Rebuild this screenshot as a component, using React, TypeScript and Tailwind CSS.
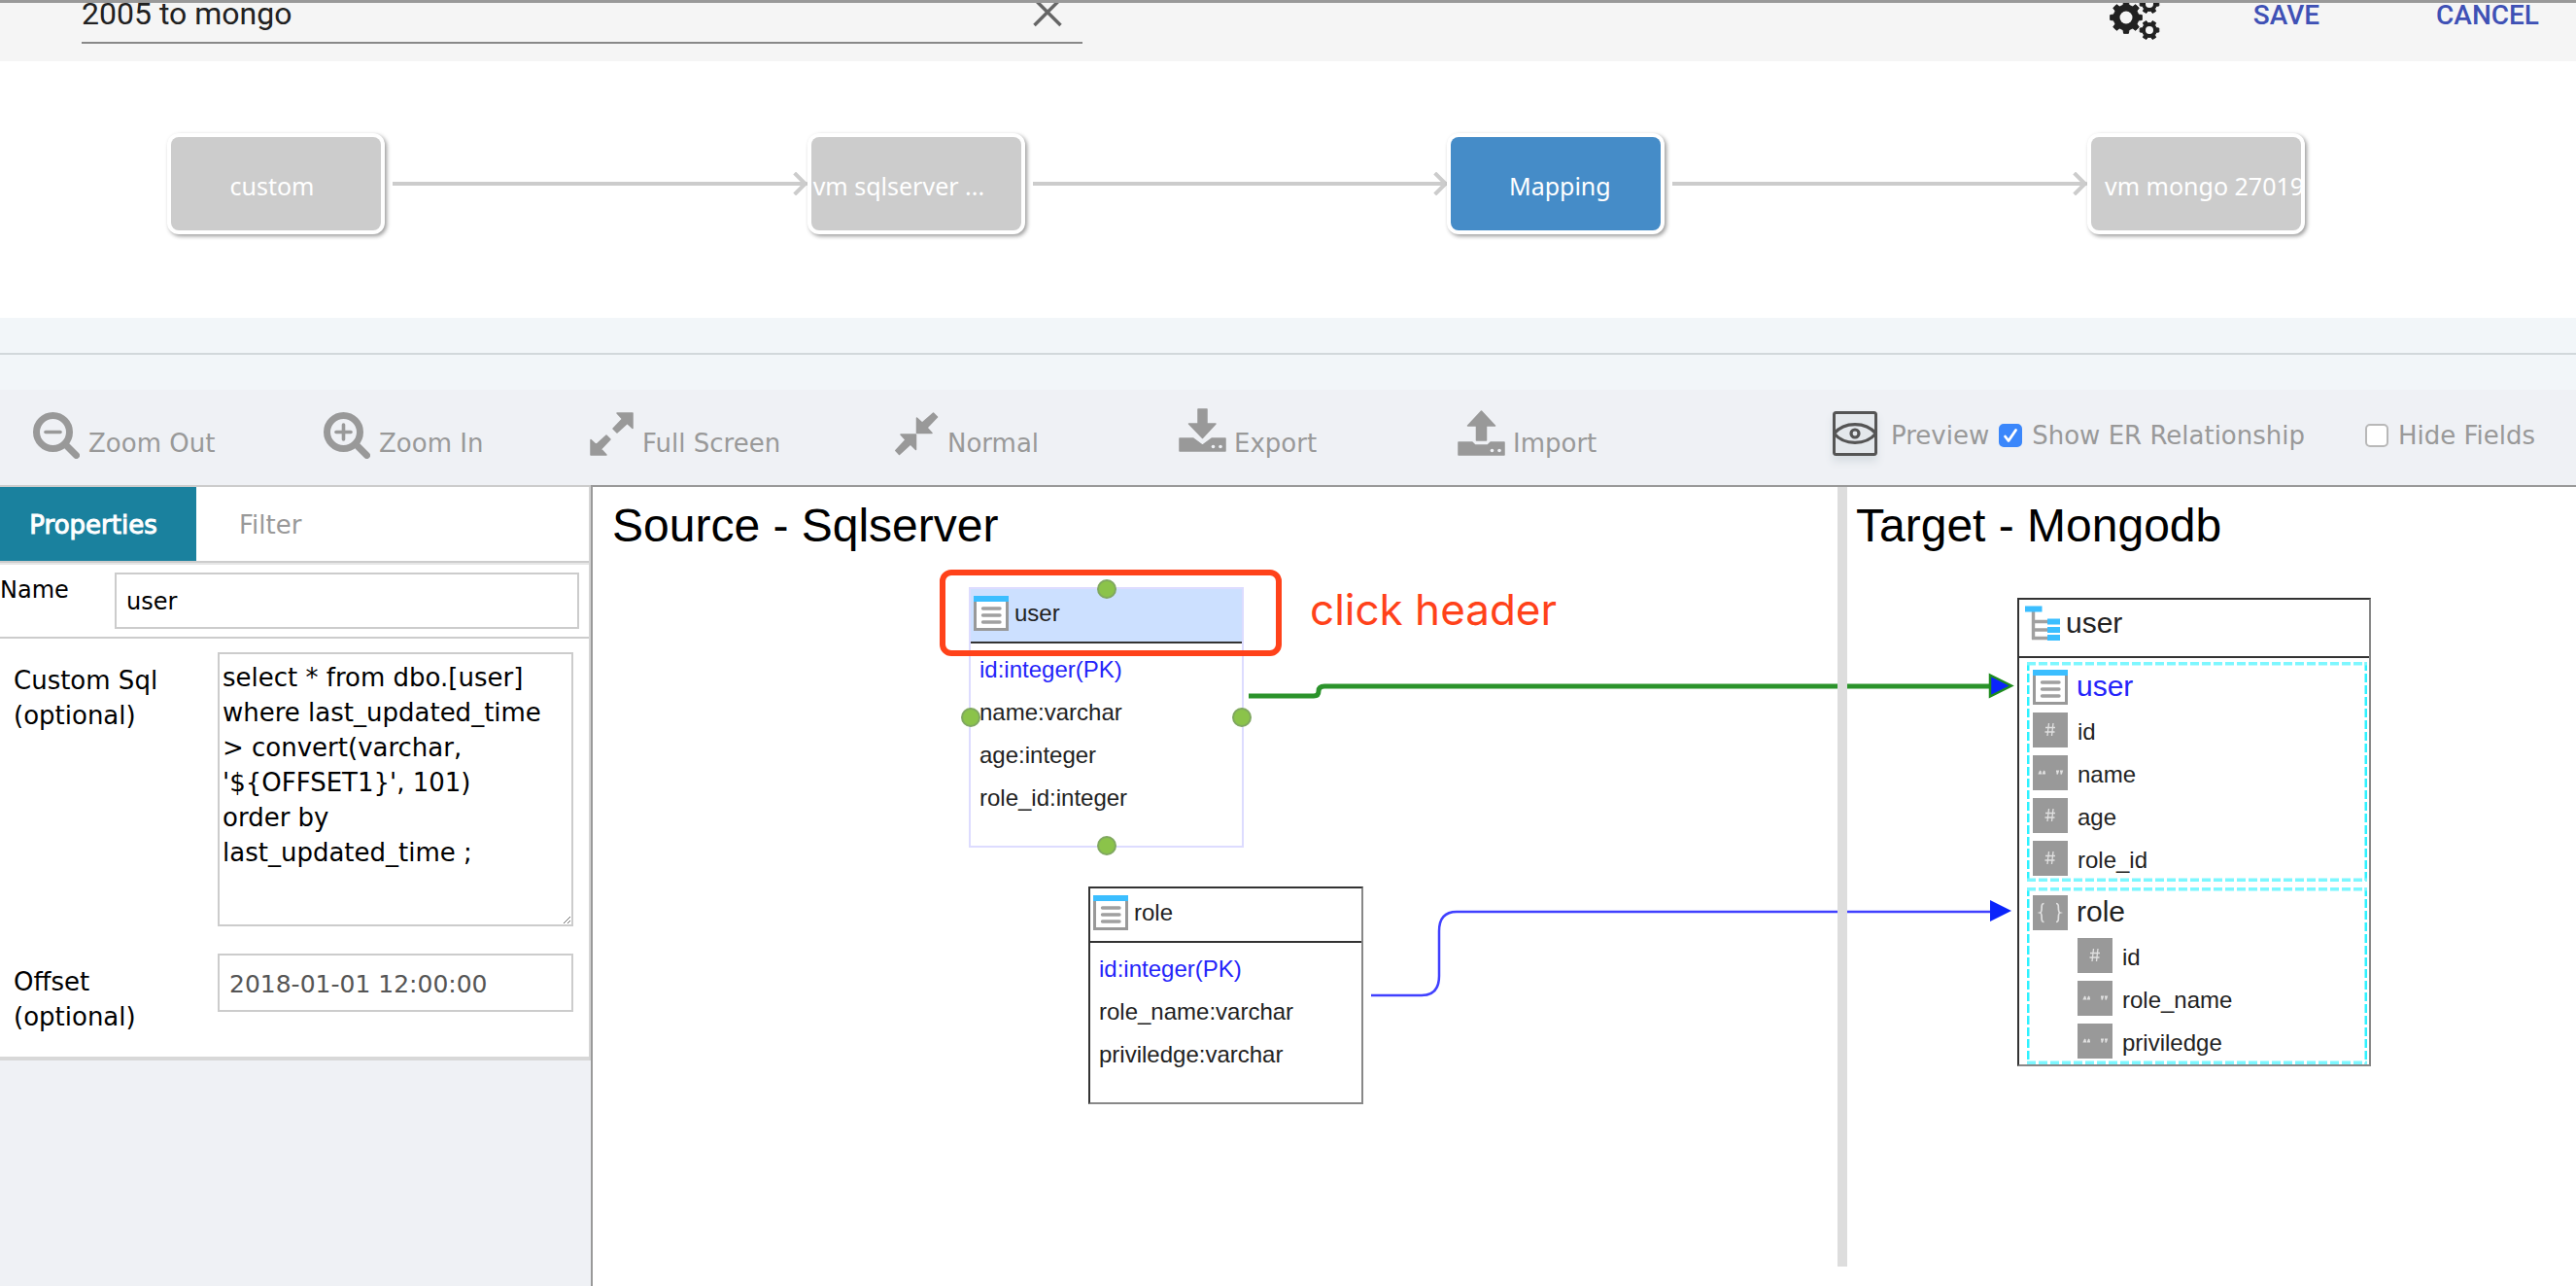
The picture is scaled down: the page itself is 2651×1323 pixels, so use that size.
import React from "react";

const stages = [
  { label: "custom", tone: "bg-[#ccc]", align: "text-center pr-2" },
  { label: "vm sqlserver ...", tone: "bg-[#ccc]", align: "text-left pl-0.5" },
  { label: "Mapping", tone: "bg-[#458cc8]", align: "text-center pl-2" },
  { label: "vm mongo 27019", tone: "bg-[#ccc]", align: "text-left pl-3.5" },
];

function gear(cx: number, cy: number, outer: number, inner: number, teeth: number, start: number) {
  const step = (Math.PI * 2) / teeth;
  const pts: string[] = [];
  for (let i = 0; i < teeth; i++) {
    const a = start + i * step;
    const at = (r: number, d: number) =>
      `${(cx + r * Math.cos(a + d * step)).toFixed(2)},${(cy + r * Math.sin(a + d * step)).toFixed(2)}`;
    pts.push(at(inner, -0.3), at(outer, -0.19), at(outer, 0.19), at(inner, 0.3));
  }
  return pts.join(" ");
}

function GearsIcon() {
  return (
    <svg width="54" height="46" viewBox="0 0 54 46" aria-hidden="true">
      <g fill="#212121" stroke="#212121" strokeLinejoin="round">
        <polygon points={gear(17, 15, 16.5, 13, 8, 0)} />
        <polygon points={gear(41, 1, 10, 7.5, 6, 0)} />
        <polygon points={gear(41, 28, 10, 7.5, 6, 0)} />
      </g>
      <g fill="#f5f5f5">
        <circle cx="17" cy="15" r="6.5" />
        <circle cx="41" cy="1" r="4" />
        <circle cx="41" cy="28" r="4" />
      </g>
    </svg>
  );
}

function ZoomIcon({ plus }: { plus?: boolean }) {
  return (
    <svg width="48" height="48" viewBox="0 0 48 48" fill="none" stroke="#999" strokeLinecap="round" aria-hidden="true">
      <circle cx="20.5" cy="20.5" r="17" strokeWidth="7" />
      <path d="M35 35L44.5 44.5" strokeWidth="7" />
      <path d="M13 20.5H28" strokeWidth="3.6" />
      {plus && <path d="M20.5 13V28" strokeWidth="3.6" />}
    </svg>
  );
}

function ExpandIcon() {
  return (
    <svg width="45" height="48" viewBox="0 0 45 48" fill="#999" stroke="#999" strokeWidth="1.5" strokeLinejoin="round" aria-hidden="true">
      <path d="M28 1H44V16.5L38.5 11.5L28 21L24 17L33.5 7Z" />
      <path d="M17 44H1V28.5L6.5 33.5L17 24L21 28L11.5 38Z" />
    </svg>
  );
}

function CompressIcon() {
  return (
    <svg width="45" height="48" viewBox="0 0 45 48" fill="#999" stroke="#999" strokeWidth="1.5" strokeLinejoin="round" aria-hidden="true">
      <path d="M22.5 21.5V6L28 11L39.5 1L43.5 5L33 16L38 21.5Z" />
      <path d="M21.5 23V38.5L16 33L4.5 43.5L0.8 39.5L11 28.5L6 23Z" />
    </svg>
  );
}

function ExportIcon() {
  return (
    <svg className="overflow-visible" width="48" height="48" viewBox="0 0 48 48" fill="#999" stroke="#999" strokeWidth="1.5" strokeLinejoin="round" aria-hidden="true">
      <path d="M20 -3H29V12H38L24.5 26.5L10.5 12H20Z" />
      <path d="M1 27H15L24.5 34L34 27H48V40H1Z" />
      <g fill="#eff1f5" stroke="none">
        <circle cx="35.5" cy="35.5" r="1.8" />
        <circle cx="43" cy="35.5" r="1.8" />
      </g>
    </svg>
  );
}

function ImportIcon() {
  return (
    <svg className="overflow-visible" width="48" height="48" viewBox="0 0 48 48" fill="#999" stroke="#999" strokeWidth="1.5" strokeLinejoin="round" aria-hidden="true">
      <path d="M24.5 -1L38.5 14H29.5V29H19.5V14H10.5Z" />
      <path d="M1 31H15L18 34H31L34 31H48V44H1Z" />
      <g fill="#eff1f5" stroke="none">
        <circle cx="35.5" cy="39.5" r="1.8" />
        <circle cx="43" cy="39.5" r="1.8" />
      </g>
    </svg>
  );
}

function EyeIcon() {
  return (
    <svg className="mb-1 shadow-[0_6px_8px_#d8dee3]" width="46" height="46" viewBox="0 0 46 46" fill="none" stroke="#555" aria-hidden="true">
      <rect x="1.5" y="1.5" width="43" height="43" rx="2" strokeWidth="3" fill="#e4e8ec" />
      <path d="M1.5 23C12 10.500 34 10.500 44.500 23C34 35.500 12 35.500 1.500 23Z" strokeWidth="3.200" />
      <circle cx="23" cy="23" r="4" strokeWidth="3.2" />
    </svg>
  );
}

function TableIcon() {
  return (
    <svg className="shrink-0" width="36" height="36" viewBox="0 0 36 36" aria-hidden="true">
      <rect x="1.5" y="1.5" width="33" height="33" fill="#fff" stroke="#999" strokeWidth="3" />
      <rect width="36" height="6" fill="#3bbeff" />
      <path d="M9.5 13H27M9.5 20H27M9.5 27H27" stroke="#a0a0a0" strokeWidth="3.4" strokeLinecap="round" />
    </svg>
  );
}

function TreeIcon() {
  return (
    <svg className="shrink-0" width="36" height="36" viewBox="0 0 36 36" fill="none" aria-hidden="true">
      <path d="M8.5 6V34.5M7 16.5H24M7 25H24M7 33.5H24" stroke="#a0a0a0" strokeWidth="3.4" />
      <path d="M0 3.5H17.5M23 16.5H36M23 25H36M23 33H36" stroke="#3bbeff" strokeWidth="6" />
    </svg>
  );
}

type Kind = "number" | "string" | "object";

function TypeIcon({ kind }: { kind: Kind }) {
  return (
    <svg className="shrink-0" width="36" height="36" viewBox="0 0 36 36" fill="none" stroke="#e0e0e0" aria-hidden="true">
      <rect width="36" height="36" fill="#999" stroke="none" />
      {kind === "number" && <path d="M16.5 11L15 24M21 11L19.5 24M13 15.5H23M12.5 20H22.5" strokeWidth="1.3" />}
      {kind === "string" && (
        <path d="M8 16L6.8 18.5H9M12 16L10.8 18.5H13M24 16.5H26L25 19.5M28 16.5H30L29 19.5" strokeWidth="1.8" />
      )}
      {kind === "object" && (
        <path
          d="M11.5 8.5C7 8.5 11 17 7.5 18C11 19 7 27.5 11.5 27.5M24 8.5C28.5 8.5 24.5 17 28 18C24.5 19 28.5 27.5 24 27.5"
          strokeWidth="1.7"
        />
      )}
    </svg>
  );
}

function ToolButton({ icon, label }: { icon: React.ReactNode; label: string }) {
  return (
    <button type="button" className="flex items-end gap-[9px] whitespace-nowrap leading-8">
      {icon}
      <span>{label}</span>
    </button>
  );
}

function Check({ id, label, checked }: { id: string; label: string; checked?: boolean }) {
  return (
    <div className="flex items-center gap-2.5 whitespace-nowrap">
      <span className="relative flex">
        <input
          id={id}
          type="checkbox"
          defaultChecked={checked}
          className="peer size-6 appearance-none rounded-[5px] border-2 border-[#b8b8b8] bg-white checked:border-[#3b87fb] checked:bg-[#3b87fb]"
        />
        <svg className="pointer-events-none absolute inset-0 hidden peer-checked:block" viewBox="0 0 24 24" fill="none" stroke="#fff" strokeWidth="2.8" strokeLinecap="round" strokeLinejoin="round" aria-hidden="true">
          <path d="M6.5 13L10 17.5L17.5 6.5" />
        </svg>
      </span>
      <label htmlFor={id}>{label}</label>
    </div>
  );
}

function SourceTable({ name, columns, selected, place }: { name: string; columns: string[]; selected?: boolean; place: string }) {
  return (
    <section
      className={`absolute w-[283px] border-2 pb-2 ${place} ${
        selected ? "border-[#dddcff]" : "border-[#333] border-r-[#888] border-b-[#888]"
      }`}
    >
      <h2
        className={`flex h-[56px] items-center gap-1.5 border-b-2 border-[#333] pb-1 pl-[3px] ${
          selected ? "bg-[#cce0ff]" : "bg-white"
        }`}
      >
        <TableIcon />
        {name}
      </h2>
      <ul className="px-[9px] pt-[5px] leading-[44px]">
        {columns.map((c, i) => (
          <li key={c} className={i === 0 ? "text-[#2424fa]" : ""}>
            {c}
          </li>
        ))}
      </ul>
      {selected && (
        <>
          <Handle place="left-1/2 top-0" />
          <Handle place="left-0 top-1/2" />
          <Handle place="left-full top-1/2" />
          <Handle place="left-1/2 top-full" />
        </>
      )}
    </section>
  );
}

function Handle({ place }: { place: string }) {
  return (
    <span
      className={`absolute size-5 -translate-x-1/2 -translate-y-1/2 rounded-full border-2 border-[#80a860] bg-[#8bc34a] ${place}`}
    />
  );
}

function EntityRow({ icon, name, tone }: { icon: React.ReactNode; name: string; tone?: string }) {
  return (
    <li className={`flex items-center gap-[9px] text-[30px] ${tone ?? ""}`}>
      {icon}
      <span className="pb-0.5 leading-[34px]">{name}</span>
    </li>
  );
}

function FieldRow({ kind, name, nested }: { kind: Kind; name: string; nested?: boolean }) {
  return (
    <li className={`flex items-center gap-2.5 ${nested ? "pl-[46px]" : ""}`}>
      <TypeIcon kind={kind} />
      <span className="pt-1 leading-8">{name}</span>
    </li>
  );
}

function DashedGroup({ children }: { children: React.ReactNode }) {
  return (
    <ul className="relative flex flex-col gap-2 px-1.5 pt-2 pb-1.5">
      <svg className="absolute inset-0 size-full" aria-hidden="true">
        <g stroke="#2ef2ff" strokeWidth="5" strokeDasharray="9 3">
          <line x1="0" x2="0" y1="0" y2="100%" />
          <line x1="100%" x2="100%" y1="0" y2="100%" />
        </g>
        <g stroke="#7df7ff" strokeWidth="7" strokeDasharray="9 3">
          <line x1="0" x2="100%" y1="0" y2="0" />
          <line x1="0" x2="100%" y1="100%" y2="100%" />
        </g>
      </svg>
      {children}
    </ul>
  );
}

export default function App() {
  return (
    <div className="flex min-h-screen flex-col bg-white font-['DejaVu_Sans',sans-serif] text-[26px] text-black">
      <header className="flex h-[63px] items-start overflow-hidden border-t-3 border-[#999] bg-[#f5f5f5] pr-[38px] pl-[84px] font-['Roboto',sans-serif]">
        <div className="flex h-[42px] w-[1030px] items-start border-b-2 border-[#888]">
          <input
            aria-label="Pipeline name"
            defaultValue="2005 to mongo"
            className="-mt-[18px] h-[58px] min-w-0 flex-1 bg-transparent text-[32px] text-[#212121] outline-none"
          />
          <button type="button" aria-label="Clear" className="mr-[21px]">
            <svg width="30" height="26" viewBox="0 0 30 26" stroke="#666" strokeWidth="3.5" aria-hidden="true">
              <path d="M1.5 -4L28.5 23M28.5 -4L1.5 23" />
            </svg>
          </button>
        </div>
        <div className="ml-auto flex items-start text-[28px] leading-[26px] font-medium text-[#3f51b5]">
          <button type="button" aria-label="Settings" className="mr-[94px]">
            <GearsIcon />
          </button>
          <button type="button" className="mr-[120px]">SAVE</button>
          <button type="button">CANCEL</button>
        </div>
      </header>

      <nav aria-label="Pipeline" className="flex h-[264px] items-start pt-[74px] pr-[279px] pl-[172px]">
        {stages.map((s, i) => (
          <React.Fragment key={s.label}>
            {i > 0 && (
              <svg className="mt-[40px] ml-2 h-6 min-w-0 flex-1" aria-hidden="true">
                <line x1="0" x2="100%" y1="12" y2="12" stroke="#ccc" strokeWidth="4" />
                <svg x="100%" className="overflow-visible">
                  <path d="M-13 1L-2 12L-13 23" fill="none" stroke="#ccc" strokeWidth="4" />
                </svg>
              </svg>
            )}
            <button
              type="button"
              className="h-[104px] w-[224px] shrink-0 rounded-xl bg-white p-1 font-['Noto_Sans',sans-serif] text-[25px] text-white shadow-[2px_2px_4px_rgba(0,0,0,0.4)]"
            >
              <span className={`block h-full overflow-hidden rounded-lg pt-1 leading-[92px] whitespace-nowrap ${s.tone} ${s.align}`}>
                {s.label}
              </span>
            </button>
          </React.Fragment>
        ))}
      </nav>

      <div className="h-[74px] bg-[#f2f6f9] pt-9">
        <hr className="border-t-2 border-[#d2d8db]" />
      </div>

      <div
        role="toolbar"
        aria-label="Diagram tools"
        className="grid h-[98px] grid-cols-[299fr_274fr_314fr_292fr_287fr_386fr_765fr] items-start bg-[#eff1f5] pt-[23px] pl-[34px] text-[#999]"
      >
        <ToolButton icon={<ZoomIcon />} label="Zoom Out" />
        <ToolButton icon={<ZoomIcon plus />} label="Zoom In" />
        <ToolButton icon={<ExpandIcon />} label="Full Screen" />
        <ToolButton icon={<CompressIcon />} label="Normal" />
        <ToolButton icon={<ExportIcon />} label="Export" />
        <ToolButton icon={<ImportIcon />} label="Import" />
        <div className="flex h-12 items-center">
          <button type="button" className="mr-2.5 flex items-center gap-3.5">
            <EyeIcon />
            Preview
          </button>
          <Check id="er" label="Show ER Relationship" checked />
          <div className="ml-[62px]">
            <Check id="hide" label="Hide Fields" />
          </div>
        </div>
      </div>

      <main className="flex flex-1">
        <aside className="w-[608px] shrink-0 border-t-2 border-[#ccc] bg-[#eff1f5]">
          <div className="border-r-2 border-[#d5d5d5] bg-white">
            <div role="tablist" className="flex h-[78px] border-b-2 border-[#ccc]">
              <button type="button" role="tab" aria-selected="true" className="w-[202px] bg-[#1a819e] pt-0.5 pr-2.5 text-white [-webkit-text-stroke:1px]">
                Properties
              </button>
              <button type="button" role="tab" aria-selected="false" className="px-11 pt-0.5 text-[#999]">
                Filter
              </button>
            </div>
            <div className="flex items-start border-t-2 border-b-2 border-t-[#e6e6e6] border-b-[#ccc] py-2 pr-2.5 text-[24px] leading-9">
              <label htmlFor="name" className="w-[118px]">
                Name
              </label>
              <input id="name" defaultValue="user" className="h-[58px] min-w-0 flex-1 border-2 border-[#ccc] px-2.5 pt-0.5" />
            </div>
            <div className="grid grid-cols-[210px_366px] gap-y-7 pt-3.5 pb-[23px] pl-3.5 leading-9">
              <label htmlFor="sql" className="pt-[11px]">
                Custom Sql
                <br />
                (optional)
              </label>
              <textarea
                id="sql"
                className="block h-[282px] border-2 border-[#ccc] px-[3px] py-1.5"
                defaultValue={"select * from dbo.[user]\nwhere last_updated_time\n> convert(varchar,\n'${OFFSET1}', 101)\norder by\nlast_updated_time ;"}
              />
              <label htmlFor="offset" className="pt-[11px]">
                Offset
                <br />
                (optional)
              </label>
              <input id="offset" defaultValue="2018-01-01 12:00:00" className="h-[60px] border-2 border-[#ccc] px-2.5 pt-0.5 text-[25px] text-[#555]" />
            </div>
            <hr className="border-t-4 border-[#d8d8d8]" />
          </div>
        </aside>

        <div className="relative min-w-0 flex-1 overflow-hidden border-t-2 border-l-2 border-[#999] bg-white font-['Liberation_Sans',sans-serif] text-[24px] text-[#222]">
          <h1 className="absolute top-3 left-5 text-[48px] leading-[56px] text-black">Source - Sqlserver</h1>
          <h1 className="absolute top-3 left-[1300px] text-[48px] leading-[56px] text-black">Target - Mongodb</h1>

          <svg className="absolute top-0 left-0" width="1480" height="800" viewBox="610 501 1480 800" fill="none" aria-hidden="true">
            <path d="M1285 716H1352Q1357 716 1357 711Q1357 706 1363 706H2050" stroke="#2b932b" strokeWidth="5" />
            <path d="M2048 694.5L2070 705.5L2048 716.5Z" fill="#0b24fb" stroke="#1f8c1f" strokeWidth="2.5" />
            <path d="M1411 1024H1463Q1481 1024 1481 1004V958Q1481 938 1499 938H2050" stroke="#4040ff" strokeWidth="2.5" />
            <path d="M2048 926L2070 937L2048 948Z" fill="#0b24fb" />
          </svg>
          <div className="absolute top-0 left-[1281px] h-[802px] w-2.5 bg-[#ddd]" />

          <SourceTable
            name="user"
            selected
            place="left-[387px] top-[103px] h-[268px]"
            columns={["id:integer(PK)", "name:varchar", "age:integer", "role_id:integer"]}
          />
          <SourceTable
            name="role"
            place="left-[510px] top-[411px] h-[224px]"
            columns={["id:integer(PK)", "role_name:varchar", "priviledge:varchar"]}
          />

          <div className="absolute top-[85px] left-[357px] h-[89px] w-[352px] rounded-[12px] border-6 border-[#ff421a]" />
          <p className="absolute top-[98px] left-[738px] font-['Inter',sans-serif] text-[44px] leading-[56px] text-[#ff421a]">
            click header
          </p>

          <section className="absolute top-[114px] left-[1466px] w-[364px] border-2 border-[#333] border-r-[#888] border-b-[#888]">
            <h2 className="flex h-[60px] items-start gap-1.5 border-b-2 border-[#333] pt-1.5 pl-1.5 text-[30px] leading-9">
              <TreeIcon />
              user
            </h2>
            <div className="flex flex-col gap-1.5 pt-1 pr-0.5 pl-2">
              <DashedGroup>
                <EntityRow icon={<TableIcon />} name="user" tone="text-[#2424fa]" />
                <FieldRow kind="number" name="id" />
                <FieldRow kind="string" name="name" />
                <FieldRow kind="number" name="age" />
                <FieldRow kind="number" name="role_id" />
              </DashedGroup>
              <DashedGroup>
                <EntityRow icon={<TypeIcon kind="object" />} name="role" />
                <FieldRow kind="number" name="id" nested />
                <FieldRow kind="string" name="role_name" nested />
                <FieldRow kind="string" name="priviledge" nested />
              </DashedGroup>
            </div>
          </section>
        </div>
      </main>
    </div>
  );
}
